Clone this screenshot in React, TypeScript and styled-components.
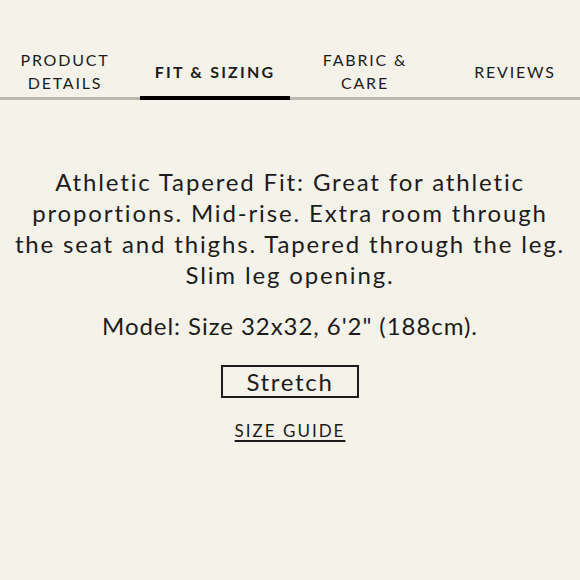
import styled, { createGlobalStyle } from 'styled-components'

const GlobalStyle = createGlobalStyle`
    html, body {
        margin: 0;
        padding: 0;
        background: #f5f2ea;
        overflow: hidden;
    }
    body {
        font-family: Lato, "Liberation Sans", sans-serif;
        color: #1c1c1c;
    }
`

const Page = styled.div`
    width: 580px;
    height: 580px;
    background: #f5f2ea;
    padding-top: 48px;
    box-sizing: border-box;
`

const TabBar = styled.div`
    display: grid;
    grid-template-columns: repeat(4, 150px);
    justify-content: center;
    border-bottom: 3px solid #bab7b0;
    height: 49px;
`

const Tab = styled.button<{ $active?: boolean }>`
    appearance: none;
    background: none;
    border: none;
    padding: 0 12px 2px;
    margin-bottom: -3px;
    display: flex;
    align-items: center;
    justify-content: center;
    text-align: center;
    font-family: inherit;
    font-size: 16px;
    line-height: 23px;
    letter-spacing: ${({ $active }) => ($active ? '2.2px' : '1.8px')};
    text-transform: uppercase;
    color: #1c1c1c;
    font-weight: ${({ $active }) => ($active ? 700 : 400)};
    border-bottom: 4px solid ${({ $active }) => ($active ? '#000' : 'transparent')};
    cursor: pointer;
`

const Panel = styled.div`
    display: flex;
    flex-direction: column;
    align-items: center;
    padding: 66px 0 0;
    text-align: center;
`

const Description = styled.p`
    margin: 0;
    font-size: 24px;
    line-height: 31px;
    letter-spacing: 1.85px;
    white-space: nowrap;
`

const Model = styled.p`
    margin: 20px 0 0;
    font-size: 24px;
    line-height: 31px;
    letter-spacing: 0.95px;
`

const Chip = styled.span`
    margin-top: 24px;
    border: 2px solid #1c1c1c;
    width: 138px;
    height: 33px;
    box-sizing: border-box;
    display: flex;
    align-items: center;
    justify-content: center;
    font-size: 24px;
    letter-spacing: 1.7px;
`

const GuideLink = styled.a`
    margin-top: 22px;
    font-size: 17px;
    letter-spacing: 2px;
    color: #1c1c1c;
    text-decoration: underline;
    text-underline-offset: 3px;
    text-decoration-thickness: 2px;
    cursor: pointer;
`

const tabs = [
    { label: 'Product details' },
    { label: 'Fit & Sizing', active: true },
    { label: 'Fabric & care' },
    { label: 'Reviews' },
]

const descriptionLines = [
    'Athletic Tapered Fit: Great for athletic',
    'proportions. Mid-rise. Extra room through',
    'the seat and thighs. Tapered through the leg.',
    'Slim leg opening.',
]

const App = () => {
    return (
        <>
            <GlobalStyle />
            <Page>
                <TabBar>
                    {tabs.map((t) => (
                        <Tab key={t.label} $active={t.active}>
                            {t.label}
                        </Tab>
                    ))}
                </TabBar>
                <Panel>
                    <Description>
                        {descriptionLines.map((line, i) => (
                            <span key={i}>
                                {line}
                                {i < descriptionLines.length - 1 && <br />}
                            </span>
                        ))}
                    </Description>
                    <Model>Model: Size 32x32, 6'2" (188cm).</Model>
                    <Chip>Stretch</Chip>
                    <GuideLink>SIZE GUIDE</GuideLink>
                </Panel>
            </Page>
        </>
    )
}

export default App
